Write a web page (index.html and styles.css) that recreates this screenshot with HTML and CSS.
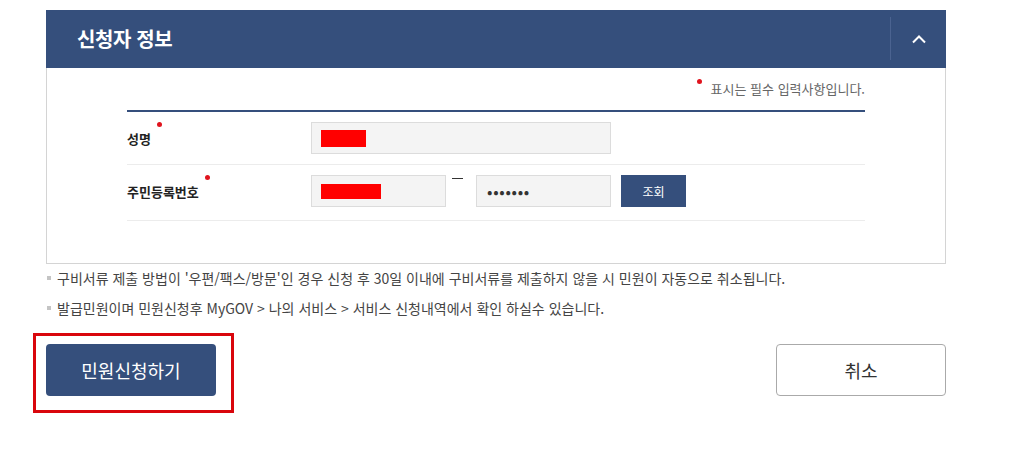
FILE: index.html
```html
<!DOCTYPE html>
<html lang="ko">
<head>
<meta charset="utf-8">
<title>신청자 정보</title>
<link rel="stylesheet" href="styles.css">
</head>
<body>
<div class="page">
  <section class="panel">
    <div class="panel-head">
      <h2 class="panel-title">신청자 정보</h2>
      <button class="toggle" type="button" aria-label="접기">
        <svg width="16" height="10" viewBox="0 0 16 10"><polyline points="2,8.5 8,2.5 14,8.5" fill="none" stroke="#fff" stroke-width="2"/></svg>
      </button>
    </div>
    <div class="panel-body">
      <p class="req-note"><span class="dot note-dot"></span>표시는 필수 입력사항입니다.</p>
      <div class="form-table">
        <div class="row row-first">
          <div class="label">성명<span class="dot label-dot"></span></div>
          <div class="field">
            <div class="input input-wide"><span class="mask mask-name"></span></div>
          </div>
        </div>
        <div class="row row-second">
          <div class="label">주민등록번호<span class="dot label-dot"></span></div>
          <div class="field">
            <div class="input input-half"><span class="mask mask-id"></span></div>
            <span class="dash"></span>
            <div class="input input-half"><span class="pw">•••••••</span></div>
            <button class="btn-small" type="button">조회</button>
          </div>
        </div>
      </div>
    </div>
  </section>
  <ul class="notes">
    <li>구비서류 제출 방법이 '우편/팩스/방문'인 경우 신청 후 30일 이내에 구비서류를 제출하지 않을 시 민원이 자동으로 취소됩니다.</li>
    <li>발급민원이며 민원신청후 MyGOV &gt; 나의 서비스 &gt; 서비스 신청내역에서 확인 하실수 있습니다.</li>
  </ul>
  <div class="actions">
    <div class="primary-wrap">
      <button class="btn-primary" type="button">민원신청하기</button>
      <span class="highlight"></span>
    </div>
    <button class="btn-cancel" type="button">취소</button>
  </div>
</div>
</body>
</html>
```

FILE: styles.css
```css
* { box-sizing: border-box; }
html, body { margin: 0; padding: 0; background: #fff; }
body {
  font-family: "Noto Sans CJK KR", "Noto Sans", sans-serif;
  color: #333;
}
.page {
  width: 900px;
  margin-left: 46px;
  padding-top: 10px;
  padding-bottom: 60px;
}
.panel {
  border: 1px solid #d4d4d4;
  border-top: none;
}
.panel-head {
  display: flex;
  align-items: stretch;
  height: 58px;
  margin: 0 -1px;
  background: #354f7c;
}
.panel-title {
  flex: 1;
  margin: 0;
  padding-left: 31px;
  font-size: 20px;
  font-weight: 700;
  line-height: 58px;
  color: #fff;
  letter-spacing: -0.4px;
}
.toggle {
  width: 56px;
  margin: 7px 0 8px;
  padding: 1px 0 0;
  border: none;
  border-left: 1px solid #4b6390;
  background: transparent;
  display: flex;
  align-items: center;
  justify-content: center;
}
.panel-body {
  padding: 11px 80px 42px;
}
.req-note {
  margin: 0 0 12px;
  display: flex;
  justify-content: flex-end;
  align-items: center;
  font-size: 13px;
  line-height: 19px;
  color: #666;
}
.dot {
  display: inline-block;
  width: 5px;
  height: 5px;
  border-radius: 50%;
  background: #e0141e;
}
.note-dot {
  margin-right: 9px;
  align-self: flex-start;
  margin-top: 0;
}
.form-table {
  border-top: 2px solid #354f7c;
}
.row {
  display: flex;
  align-items: center;
  border-bottom: 1px solid #ececec;
}
.row-first { padding: 10px 0 10px; }
.row-second { padding: 10px 0 13px; }
.label {
  width: 184px;
  font-size: 13px;
  font-weight: 700;
  color: #222;
  display: flex;
  align-items: flex-start;
}
.label-dot {
  margin-left: 6px;
  margin-top: -7px;
}
.field {
  display: flex;
  align-items: center;
}
.input {
  height: 32px;
  background: #f4f4f4;
  border: 1px solid #dcdcdc;
  display: flex;
  align-items: center;
  padding-left: 9px;
}
.input-wide { width: 300px; }
.input-half { width: 135px; }
.mask { display: block; height: 17px; background: #ff0000; }
.mask-name { width: 45px; }
.mask-id { width: 60px; height: 15px; }
.dash {
  align-self: flex-start;
  width: 11px;
  height: 1px;
  margin: 3px 13px 0 6px;
  background: #333;
}
.pw {
  font-size: 16px;
  letter-spacing: 0.7px;
  color: #333;
  padding-left: 1px;
}
.btn-small {
  width: 65px;
  height: 32px;
  margin-left: 10px;
  border: none;
  background: #354f7c;
  color: #fff;
  font-family: inherit;
  font-size: 12px;
  padding: 0;
}
.notes {
  list-style: none;
  margin: -1px 0 0;
  padding: 0;
}
.notes li {
  padding-left: 11px;
  font-size: 14px;
  line-height: 30px;
  color: #444;
  display: flex;
  align-items: center;
}
.notes li::before {
  content: "";
  width: 4px;
  height: 4px;
  background: #c4c4c4;
  margin-left: -10px;
  margin-right: 6px;
  flex: none;
}
.actions {
  display: flex;
  justify-content: space-between;
  padding-top: 21px;
}
.primary-wrap {
  position: relative;
}
.btn-primary, .btn-cancel {
  width: 170px;
  height: 52px;
  border-radius: 4px;
  font-family: inherit;
  font-size: 18px;
  padding: 0;
}
.btn-primary {
  border: none;
  background: #354f7c;
  color: #fff;
}
.btn-cancel {
  background: #fff;
  border: 1px solid #aaa;
  color: #333;
}
.highlight {
  position: absolute;
  left: -13px;
  top: -11px;
  width: 201px;
  height: 80px;
  border: 3px solid #d9060c;
  pointer-events: none;
}
```
